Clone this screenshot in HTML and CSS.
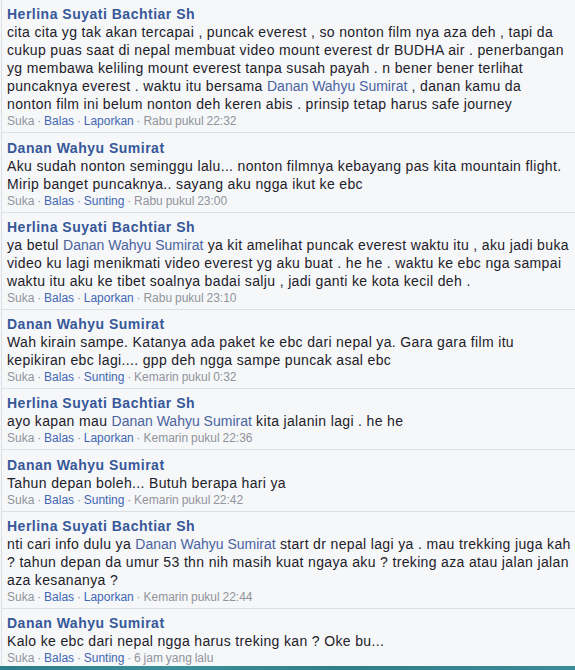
FILE: index.html
```html
<!DOCTYPE html>
<html lang="id">
<head>
<meta charset="utf-8">
<title>Komentar</title>
<link rel="stylesheet" href="styles.css">
</head>
<body>
<div class="thread">
  <div class="comment">
    <div class="name">Herlina Suyati Bachtiar Sh</div>
    <div class="text">cita cita yg tak akan tercapai , puncak everest , so nonton film nya aza deh , tapi da<br>cukup puas saat di nepal membuat video mount everest dr BUDHA air . penerbangan<br>yg membawa keliling mount everest tanpa susah payah . n bener bener terlihat<br>puncaknya everest . waktu itu bersama <span class="mention">Danan Wahyu Sumirat</span> , danan kamu da<br>nonton film ini belum nonton deh keren abis . prinsip tetap harus safe journey</div>
    <div class="meta"><span>Suka</span> · <a>Balas</a> · <a>Laporkan</a> · <span>Rabu pukul 22:32</span></div>
  </div>
  <div class="comment">
    <div class="name">Danan Wahyu Sumirat</div>
    <div class="text">Aku sudah nonton seminggu lalu... nonton filmnya kebayang pas kita mountain flight.<br>Mirip banget puncaknya.. sayang aku ngga ikut ke ebc</div>
    <div class="meta"><span>Suka</span> · <a>Balas</a> · <a>Sunting</a> · <span>Rabu pukul 23:00</span></div>
  </div>
  <div class="comment">
    <div class="name">Herlina Suyati Bachtiar Sh</div>
    <div class="text">ya betul <span class="mention">Danan Wahyu Sumirat</span> ya kit amelihat puncak everest waktu itu , aku jadi buka<br>video ku lagi menikmati video everest yg aku buat . he he . waktu ke ebc nga sampai<br>waktu itu aku ke tibet soalnya badai salju , jadi ganti ke kota kecil deh .</div>
    <div class="meta"><span>Suka</span> · <a>Balas</a> · <a>Laporkan</a> · <span>Rabu pukul 23:10</span></div>
  </div>
  <div class="comment">
    <div class="name">Danan Wahyu Sumirat</div>
    <div class="text">Wah kirain sampe. Katanya ada paket ke ebc dari nepal ya. Gara gara film itu<br>kepikiran ebc lagi.... gpp deh ngga sampe puncak asal ebc</div>
    <div class="meta"><span>Suka</span> · <a>Balas</a> · <a>Sunting</a> · <span>Kemarin pukul 0:32</span></div>
  </div>
  <div class="comment">
    <div class="name">Herlina Suyati Bachtiar Sh</div>
    <div class="text">ayo kapan mau <span class="mention">Danan Wahyu Sumirat</span> kita jalanin lagi . he he</div>
    <div class="meta"><span>Suka</span> · <a>Balas</a> · <a>Laporkan</a> · <span>Kemarin pukul 22:36</span></div>
  </div>
  <div class="comment">
    <div class="name">Danan Wahyu Sumirat</div>
    <div class="text">Tahun depan boleh... Butuh berapa hari ya</div>
    <div class="meta"><span>Suka</span> · <a>Balas</a> · <a>Sunting</a> · <span>Kemarin pukul 22:42</span></div>
  </div>
  <div class="comment">
    <div class="name">Herlina Suyati Bachtiar Sh</div>
    <div class="text">nti cari info dulu ya <span class="mention">Danan Wahyu Sumirat</span> start dr nepal lagi ya . mau trekking juga kah<br>? tahun depan da umur 53 thn nih masih kuat ngaya aku ? treking aza atau jalan jalan<br>aza kesananya ?</div>
    <div class="meta"><span>Suka</span> · <a>Balas</a> · <a>Laporkan</a> · <span>Kemarin pukul 22:44</span></div>
  </div>
  <div class="comment last">
    <div class="name">Danan Wahyu Sumirat</div>
    <div class="text">Kalo ke ebc dari nepal ngga harus treking kan ? Oke bu...</div>
    <div class="meta"><span>Suka</span> · <a>Balas</a> · <a>Sunting</a> · <span>6 jam yang lalu</span></div>
  </div>
</div>
<div class="bottombar"></div>
</body>
</html>
```

FILE: styles.css
```css
html, body {
  margin: 0;
  padding: 0;
  height: 670px;
  overflow: hidden;
  background: #f6f7f9;
}

body {
  font-family: "Liberation Sans", Arial, sans-serif;
  color: #1d2129;
}

.thread {
  margin-left: 1px;
  border-left: 1px solid #dcdfe4;
  background: #f6f7f9;
}

.comment {
  padding: 5.25px 0 3px 5px;
  border-bottom: 1px solid #dddfe2;
  overflow: hidden;
}

.comment.last {
  padding-bottom: 0;
  border-bottom: none;
}

.name {
  font-size: 14px;
  line-height: 18px;
  font-weight: bold;
  letter-spacing: 0.5px;
  color: #365899;
}

.text {
  font-size: 14px;
  line-height: 18px;
  letter-spacing: 0.35px;
  white-space: nowrap;
}

.mention {
  color: #4a63a0;
  letter-spacing: 0;
}

.meta {
  font-size: 12px;
  line-height: 16px;
  word-spacing: -0.5px;
  color: #90949c;
}

.meta a {
  color: #4267b2;
}

.bottombar {
  height: 6px;
  background: linear-gradient(to right, #2c7d8a, #3c8f98 30%, #2f7f88 60%, #3a8c96);
}
```
